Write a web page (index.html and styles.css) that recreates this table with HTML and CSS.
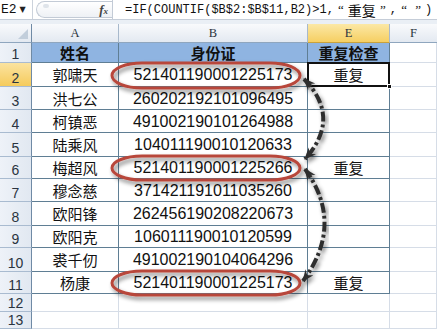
FILE: index.html
```html
<!DOCTYPE html>
<html lang="zh-CN">
<head>
<meta charset="utf-8">
<title>重复检查</title>
<link rel="stylesheet" href="styles.css">
</head>
<body>
<div class="app">
  <div class="formula-bar">
    <div class="namebox">E2<span class="caret">▼</span></div>
    <div class="fx-box"><span class="grip"></span><span class="fx">f<span class="fx-x">x</span></span></div>
    <div class="formula">=IF(COUNTIF($B$2:$B$11,B2)&gt;1,<span class="q">“</span><span class="cjk">重复</span><span class="q">”</span>,<span class="q">“</span><span class="q">”</span>)</div>
  </div>
  <div class="gap"></div>
  <div class="sheet">
    <div class="hd corner"><span class="tri"></span></div>
    <div class="hd col">A</div>
    <div class="hd col">B</div>
    <div class="hd col sel">E</div>
    <div class="hd col last">F</div>

    <div class="rn">1</div>
    <div class="c t th">姓名</div>
    <div class="c t th">身份证</div>
    <div class="c t th">重复检查</div>
    <div class="c e"></div>

    <div class="rn sel">2</div>
    <div class="c t nm">郭啸天</div>
    <div class="c t id">521401190001225173</div>
    <div class="c t nm active">重复<span class="handle"></span></div>
    <div class="c e"></div>

    <div class="rn">3</div>
    <div class="c t nm">洪七公</div>
    <div class="c t id">260202192101096495</div>
    <div class="c t nm"></div>
    <div class="c e"></div>

    <div class="rn">4</div>
    <div class="c t nm">柯镇恶</div>
    <div class="c t id">491002190101264988</div>
    <div class="c t nm"></div>
    <div class="c e"></div>

    <div class="rn">5</div>
    <div class="c t nm">陆乘风</div>
    <div class="c t id">104011190010120633</div>
    <div class="c t nm"></div>
    <div class="c e"></div>

    <div class="rn">6</div>
    <div class="c t nm">梅超风</div>
    <div class="c t id">521401190001225266</div>
    <div class="c t nm">重复</div>
    <div class="c e"></div>

    <div class="rn">7</div>
    <div class="c t nm">穆念慈</div>
    <div class="c t id">371421191011035260</div>
    <div class="c t nm"></div>
    <div class="c e"></div>

    <div class="rn">8</div>
    <div class="c t nm">欧阳锋</div>
    <div class="c t id">262456190208220673</div>
    <div class="c t nm"></div>
    <div class="c e"></div>

    <div class="rn">9</div>
    <div class="c t nm">欧阳克</div>
    <div class="c t id">106011190010120599</div>
    <div class="c t nm"></div>
    <div class="c e"></div>

    <div class="rn">10</div>
    <div class="c t nm">裘千仞</div>
    <div class="c t id">491002190104064296</div>
    <div class="c t nm"></div>
    <div class="c e"></div>

    <div class="rn">11</div>
    <div class="c t nm">杨康</div>
    <div class="c t id">521401190001225173</div>
    <div class="c t nm">重复</div>
    <div class="c e"></div>

    <div class="rn">12</div>
    <div class="c e"></div>
    <div class="c e"></div>
    <div class="c e"></div>
    <div class="c e"></div>

    <div class="rn">13</div>
    <div class="c e"></div>
    <div class="c e"></div>
    <div class="c e"></div>
    <div class="c e"></div>
  </div>

  <svg class="overlay" width="437" height="333" viewBox="0 0 437 333" aria-hidden="true">
    <defs>
      <filter id="sh" x="-20%" y="-40%" width="140%" height="180%">
        <feGaussianBlur in="SourceAlpha" stdDeviation="2"/>
        <feOffset dx="2" dy="3" result="b"/>
        <feComponentTransfer><feFuncA type="linear" slope="0.5"/></feComponentTransfer>
        <feMerge><feMergeNode/><feMergeNode in="SourceGraphic"/></feMerge>
      </filter>
      <marker id="ah" markerUnits="userSpaceOnUse" markerWidth="14" markerHeight="12" refX="11" refY="5" orient="auto-start-reverse">
        <path d="M0,0 L12,5 L0,10 L4,5 Z" fill="#2f2f2f"/>
      </marker>
    </defs>
    <g fill="none" stroke="#b8473b" stroke-width="3" filter="url(#sh)">
      <rect x="112" y="63" width="188" height="25" rx="30" ry="12.5"/>
      <rect x="112" y="156" width="188" height="24" rx="30" ry="12"/>
      <rect x="112" y="271" width="188" height="24" rx="30" ry="12"/>
    </g>
    <g fill="none" stroke="#2f2f2f" stroke-width="4" stroke-dasharray="10 3 3 3" filter="url(#sh)">
      <path d="M304,79 Q342,118 305,159" marker-start="url(#ah)" marker-end="url(#ah)"/>
      <path d="M305,169 Q345,224 303,281" marker-start="url(#ah)" marker-end="url(#ah)"/>
    </g>
  </svg>
</div>
</body>
</html>
```
FILE: styles.css
```css
* { box-sizing: border-box; }
html, body { margin: 0; padding: 0; background: #fff; }
body { width: 437px; height: 333px; overflow: hidden; }

.app {
  position: relative;
  width: 437px;
  height: 333px;
  font-family: "Noto Sans CJK SC", "Liberation Sans", sans-serif;
  color: #111;
}

/* formula bar */
.formula-bar {
  display: flex;
  height: 20px;
  background: #fff;
  border-bottom: 1px solid #c5cdd8;
  font-family: "Liberation Mono", "Noto Sans CJK SC", monospace;
  font-size: 12px;
  color: #111;
}
.namebox {
  width: 33px;
  display: flex;
  align-items: center;
  padding-left: 1px;
  border-right: 1px solid #ccd3dc;
  white-space: nowrap;
  font-size: 13px;
}
.caret { font-size: 8px; margin-left: 3px; color: #222; font-family: "DejaVu Sans", sans-serif; }
.fx-box {
  width: 76px;
  margin: 1px 0 1px 3px;
  border: 1px solid #c3cbd6;
  border-right: none;
  border-radius: 10px 0 0 10px;
  background: linear-gradient(#ffffff, #eef1f5);
  display: flex;
  align-items: center;
  justify-content: space-between;
  padding: 0 4px 0 6px;
}
.grip { width: 6px; height: 4px; border-radius: 3px; background: #dfe4ea; margin-top: -8px; }
.fx {
  font-family: "Liberation Serif", serif;
  font-style: italic;
  font-weight: bold;
  font-size: 13px;
  color: #444;
}
.fx-x { font-size: 9px; }
.formula {
  flex: 1;
  display: flex;
  align-items: center;
  padding-left: 12px;
  border-left: 1px solid #c3cbd6;
  white-space: nowrap;
  overflow: hidden;
}
.q { display: inline-block; width: 14px; text-align: center; font-family: "Liberation Serif", serif; font-size: 13px; }
.cjk { font-family: "Noto Sans CJK SC", sans-serif; font-size: 14px; }

.gap { height: 4px; background: #eaeff5; }

/* sheet grid */
.sheet {
  display: grid;
  grid-template-columns: 32px 87px 189px 82px 1fr;
  grid-template-rows: 19px 20px 24px 23px 23px 24px 22px 23px 24px 22px 24px 22px 18px 17px;
}

.hd {
  background: linear-gradient(#f9fafc, #e3e9f1);
  border-right: 1px solid #a8b9cc;
  border-bottom: 1px solid #8fa6be;
  font-family: "Liberation Serif", serif;
  font-size: 12.5px;
  color: #2a3440;
  display: flex;
  align-items: center;
  justify-content: center;
}
.hd.corner { justify-content: flex-end; align-items: flex-end; padding: 0 3px 3px 0; border-right-color: #6f8aa5; }
.tri { width: 10px; height: 10px; background: #c2cedb; clip-path: polygon(100% 0, 100% 100%, 0 100%); }
.hd.sel { background: linear-gradient(#fbe8a6, #f6cf62); border-bottom-color: #c9a23c; }
.hd.last { border-right: none; }

.rn {
  background: linear-gradient(90deg, #eef2f8, #e1e8f1);
  border-right: 1px solid #6f8aa5;
  border-bottom: 1px solid #a9bbd0;
  font-family: "Liberation Sans", sans-serif;
  font-size: 14px;
  color: #2a3440;
  display: flex;
  align-items: flex-end;
  justify-content: center;
  padding-bottom: 1px;
  line-height: 1;
}
.rn.sel { background: linear-gradient(#fbe3a0, #f5cb5c); }

.c {
  display: flex;
  align-items: center;
  justify-content: center;
  white-space: nowrap;
  line-height: 1;
}
.c.t { border-right: 1px solid #5f7e94; border-bottom: 1px solid #5f7e94; }
.c.e { border-right: 1px solid #d6dde7; border-bottom: 1px solid #d6dde7; }
.c.th {
  background: #8fb4e1;
  font-weight: bold;
  font-size: 15px;
  color: #111;
}
.c.nm { font-size: 15px; }
.c.id {
  font-family: "Liberation Sans", sans-serif;
  font-size: 16px;
  padding-top: 1px;
}
.c.active { position: relative; }
.c.active::before {
  content: "";
  position: absolute;
  left: -1px;
  top: -1px;
  right: -1px;
  bottom: -1px;
  border: 2px solid #111;
}
.handle {
  position: absolute;
  right: -3px;
  bottom: -3px;
  width: 5px;
  height: 5px;
  background: #111;
  border: 1px solid #fff;
}

.overlay {
  position: absolute;
  left: 0;
  top: 0;
  pointer-events: none;
}
```
